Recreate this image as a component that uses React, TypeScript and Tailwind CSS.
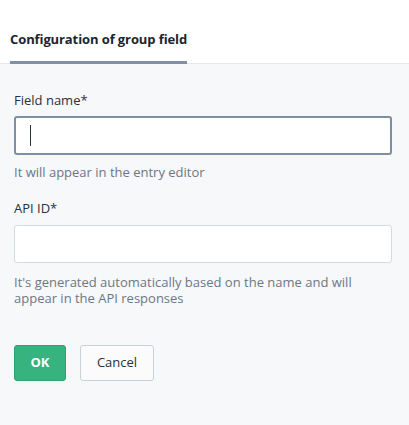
import { useState } from "react";

export default function App() {
  const [name, setName] = useState("");
  const [apiId, setApiId] = useState("");

  return (
    <div className="min-h-[425px] w-full bg-[#f7f8fa] font-['Open_Sans',sans-serif] text-[13px] text-[#2a3039]">
      {/* Tabs */}
      <div className="flex h-[64px] items-end border-b border-[#e3e6ea] bg-white px-[10px]">
        <div className="flex h-[34px] flex-col justify-between">
          <span className="whitespace-nowrap text-[13px] font-bold leading-[20px] tracking-[-0.1px] text-[#192532]">
            Configuration of group field
          </span>
          <div className="mb-[-1px] h-[3px] bg-[#8091a5]" />
        </div>
      </div>

      <div className="pl-[14px] pr-[17px] pt-[26px]">
        <label className="block leading-[20px]">Field name*</label>
        <div className="relative mt-[6px]">
          <input
            value={name}
            onChange={(e) => setName(e.target.value)}
            className="block h-[39px] w-full rounded-[3px] border-2 border-[#7f8ea3] bg-white px-[14px] caret-transparent outline-none"
          />
          {name === "" && (
            <span className="pointer-events-none absolute left-[16px] top-[9px] h-[21px] w-[1px] bg-[#2a3039]" />
          )}
        </div>
        <p className="mt-[7px] leading-[20px] text-[#6b7786]">It will appear in the entry editor</p>

        <label className="mt-[16px] block leading-[20px]">API ID*</label>
        <input
          value={apiId}
          onChange={(e) => setApiId(e.target.value)}
          className="mt-[7px] block h-[38px] w-full rounded-[3px] border border-[#d3dce0] bg-white px-[14px] outline-none"
        />
        <p className="mt-[11px] leading-[16px] text-[#6b7786]">
          It's generated automatically based on the name and will appear in the API responses
        </p>

        <div className="mt-[39px] flex gap-[14px]">
          <button className="h-[36px] w-[52px] rounded-[3px] border border-[#2ea36f] bg-[#36b37e] font-bold text-white">
            OK
          </button>
          <button className="h-[36px] w-[74px] rounded-[3px] border border-[#c5d2d8] bg-[#fbfbfc] text-[#2a3039]">
            Cancel
          </button>
        </div>
      </div>
    </div>
  );
}
